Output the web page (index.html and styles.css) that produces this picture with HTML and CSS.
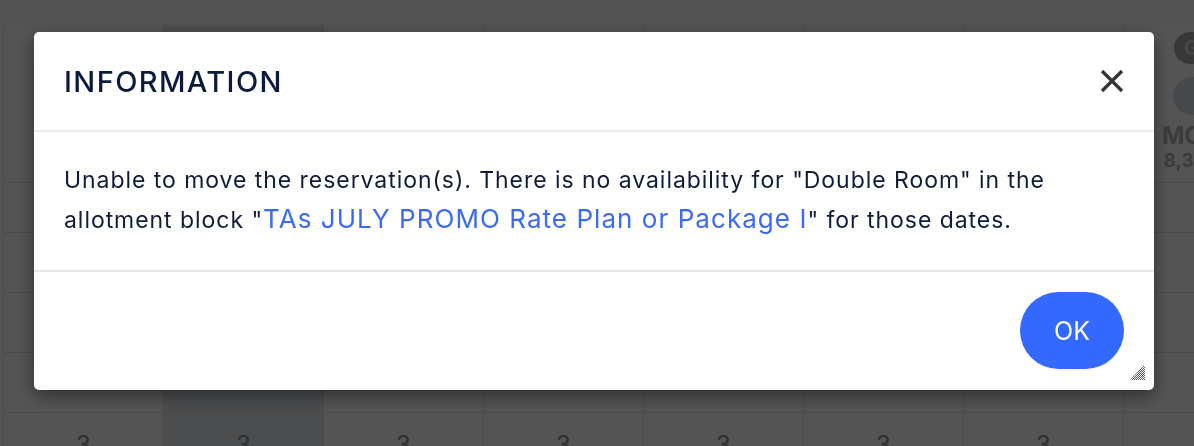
FILE: index.html
```html
<!DOCTYPE html>
<html lang="en">
<head>
    <meta charset="UTF-8">
    <meta name="viewport" content="width=device-width, initial-scale=1.0">
    <title>Information</title>
    <link rel="stylesheet" href="styles.css">
</head>
<body>
    <div class="calendar">
        <div class="toolbar"></div>
        <div class="grid">
            <div class="cell head"></div>
            <div class="cell head today"></div>
            <div class="cell head"></div>
            <div class="cell head"></div>
            <div class="cell head"></div>
            <div class="cell head"></div>
            <div class="cell head"></div>
            <div class="cell head">
                <span class="badge">G</span>
                <span class="avatar"></span>
                <span class="day">MON</span>
                <span class="date">8,300</span>
            </div>

            <div class="cell short"></div>
            <div class="cell short today"></div>
            <div class="cell short"></div>
            <div class="cell short"></div>
            <div class="cell short"></div>
            <div class="cell short"></div>
            <div class="cell short"></div>
            <div class="cell short"></div>

            <div class="cell"></div><div class="cell today"></div><div class="cell"></div><div class="cell"></div>
            <div class="cell"></div><div class="cell"></div><div class="cell"></div><div class="cell"></div>

            <div class="cell"></div><div class="cell today"></div><div class="cell"></div><div class="cell"></div>
            <div class="cell"></div><div class="cell"></div><div class="cell"></div><div class="cell"></div>

            <div class="cell"></div><div class="cell today"></div><div class="cell"></div><div class="cell"></div>
            <div class="cell"></div><div class="cell"></div><div class="cell"></div><div class="cell"></div>

            <div class="cell num">3</div><div class="cell num today">3</div><div class="cell num">3</div><div class="cell num">3</div>
            <div class="cell num">3</div><div class="cell num">3</div><div class="cell num">3</div><div class="cell num">3</div>
        </div>
    </div>

    <div class="overlay">
        <div class="dialog">
            <div class="dialog-header">
                <h1>INFORMATION</h1>
                <button class="close" aria-label="Close">
                    <svg width="24" height="24" viewBox="0 0 24 24">
                        <path d="M2 2 L22 22 M22 2 L2 22" stroke="#333" stroke-width="3.2" fill="none"/>
                    </svg>
                </button>
            </div>
            <div class="dialog-body">
                <p>Unable to move the reservation(s). There is no availability for "Double Room" in the allotment block "<span class="link">TAs JULY PROMO Rate Plan or Package I</span>" for those dates.</p>
            </div>
            <div class="dialog-footer">
                <button class="ok">OK</button>
            </div>
            <svg class="grip" width="16" height="16" viewBox="0 0 16 16">
                <defs>
                    <pattern id="dots" width="2" height="2" patternUnits="userSpaceOnUse">
                        <rect width="1" height="1" fill="#555"/>
                        <rect x="1" y="1" width="1" height="1" fill="#555"/>
                    </pattern>
                </defs>
                <path d="M13 1 Q15 0 15 3 L15 15 L0 15 Z" fill="url(#dots)"/>
            </svg>
        </div>
    </div>
</body>
</html>
```

FILE: styles.css
```css
body { margin: 0; font-family: Inter, "Noto Sans", sans-serif; background: #fff; overflow: hidden; }

.calendar { height: 446px; overflow: hidden; }
.toolbar { height: 25px; background: #f8f8f8; }
.grid { display: grid; grid-template-columns: repeat(8, 160px); grid-template-rows: 158px 50px 60px 60px 60px 60px; margin-left: 3px; }
.cell { border-left: 1px solid #e2e2e2; border-bottom: 1px solid #e2e2e2; }
.cell.today { background: #e4e9ee; }
.cell.num { text-align: center; padding-top: 20px; font-size: 24px; line-height: 1; color: #8c8c8c; }
.head { display: flex; flex-direction: column; align-items: center; padding-top: 7px; padding-right: 24px; }
.badge { width: 36px; height: 32px; border-radius: 16px; background: #ababab; color: #d4d4d4; font-weight: 700; font-size: 20px; line-height: 32px; text-align: center; }
.avatar { width: 38px; height: 38px; border-radius: 50%; background: #d5dde4; margin-top: 13px; }
.day { margin-top: 8px; font-size: 24px; font-weight: 700; color: #b3b3b3; line-height: 1.1; }
.date { font-size: 19px; font-weight: 700; color: #b3b3b3; }

.overlay { position: fixed; inset: 0; background: rgba(0, 0, 0, 0.67); padding: 32px 40px 0 34px; }
.dialog { position: relative; width: 1120px; height: 358px; background: #fff; border-radius: 5px; box-shadow: 0 6px 18px rgba(0, 0, 0, 0.45); display: flex; flex-direction: column; color: #0f1b3d; }

.dialog-header { height: 98px; display: flex; align-items: center; justify-content: space-between; padding: 0 30px; border-bottom: 2px solid #ececec; }
.dialog-header h1 { margin: 0; font-size: 29px; font-weight: 500; letter-spacing: 1.4px; color: #0c1a3d; }
.close { border: 0; background: none; padding: 0; width: 24px; height: 24px; cursor: pointer; }

.dialog-body { height: 138px; padding: 0 30px; border-bottom: 2px solid #e6e6e6; }
.dialog-body p { margin: 0; padding-top: 28px; font-size: 23px; letter-spacing: 0.95px; line-height: 40px; color: #111c3b; }
.link { color: #3b6af5; font-size: 26px; line-height: 1; letter-spacing: 1.05px; }

.dialog-footer { flex: 1; display: flex; justify-content: flex-end; align-items: flex-start; padding: 20px 30px 0; }
.ok { width: 104px; height: 77px; border: 0; border-radius: 39px; background: #3469ff; color: #fff; font-family: inherit; font-size: 25px; cursor: pointer; }

.grip { position: absolute; right: 8px; bottom: 9px; }
```
